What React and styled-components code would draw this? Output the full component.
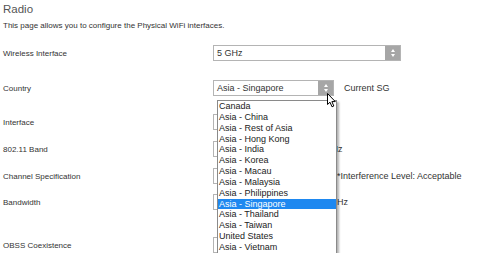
import React from "react"
import styled, { createGlobalStyle } from "styled-components"

const GlobalStyle = createGlobalStyle`
  body {
    margin: 0;
    background: #fff;
    color: #333;
    font-family: "Liberation Sans", Arial, sans-serif;
  }
`

const Page = styled.div`
  position: relative;
  padding: 2px 0 0 3px;
`

const Title = styled.h1`
  margin: 0;
  font-size: 11.5px;
  line-height: 14px;
  font-weight: normal;
  color: #555;
`

const Intro = styled.p`
  margin: 5px 0 0;
  font-size: 8px;
  line-height: 10px;
  color: #333;
`

const Form = styled.div`
  display: flex;
  flex-direction: column;
  margin-top: 14px;
`

const Row = styled.div`
  display: flex;
  align-items: center;
  height: 16px;
  margin-bottom: ${(p) => p.$space || 0}px;
`

const Label = styled.div`
  width: 210px;
  flex-shrink: 0;
  font-size: 8px;
  color: #333;
`

const SelectWrap = styled.div`
  position: relative;
  display: flex;
  align-items: center;
`

const SelectBox = styled.div`
  box-sizing: border-box;
  display: flex;
  align-items: center;
  justify-content: space-between;
  width: ${(p) => p.$width}px;
  height: 16px;
  border: 1px solid #b4b4b4;
  background: #fff;
  font-size: 9px;
  color: #333;
  padding-left: 3px;
`

const Arrow = styled.div`
  display: flex;
  flex-direction: column;
  align-items: center;
  justify-content: center;
  gap: 2px;
  width: 15px;
  height: 100%;
  background: #a6a6a6;
`

const Tri = styled.span`
  width: 0;
  height: 0;
  border-left: 2px solid transparent;
  border-right: 2px solid transparent;
  ${(p) =>
    p.$down ? "border-top: 3px solid #fff;" : "border-bottom: 3px solid #fff;"}
`

const Note = styled.span`
  margin-left: ${(p) => p.$offset || 10}px;
  font-size: 9px;
  color: #333;
  white-space: nowrap;
`

const List = styled.ul`
  position: absolute;
  top: 20px;
  left: 4px;
  z-index: 5;
  box-sizing: border-box;
  width: 120px;
  margin: 0;
  padding: 0;
  list-style: none;
  border: 1px solid #8a8a8a;
  background: #fff;
  box-shadow: 2px 2px 2px rgba(0, 0, 0, 0.3);
`

const Option = styled.li`
  height: 10.85px;
  line-height: 10.85px;
  padding-left: 1px;
  font-size: 9px;
  white-space: nowrap;
  color: ${(p) => (p.$active ? "#fff" : "#222")};
  background: ${(p) => (p.$active ? "#1e88f0" : "transparent")};
`

const Cursor = styled.svg`
  position: absolute;
  left: 114px;
  top: 13px;
  z-index: 6;
`

const countries = [
  "Canada",
  "Asia - China",
  "Asia - Rest of Asia",
  "Asia - Hong Kong",
  "Asia - India",
  "Asia - Korea",
  "Asia - Macau",
  "Asia - Malaysia",
  "Asia - Philippines",
  "Asia - Singapore",
  "Asia - Thailand",
  "Asia - Taiwan",
  "United States",
  "Asia - Vietnam",
]

const Select = ({ width, value }) => (
  <SelectBox $width={width}>
    <span>{value}</span>
    <Arrow>
      <Tri />
      <Tri $down />
    </Arrow>
  </SelectBox>
)

const App = () => {
  return (
    <Page>
      <GlobalStyle />
      <Title>Radio</Title>
      <Intro>This page allows you to configure the Physical WiFi interfaces.</Intro>

      <Form>
        <Row $space={19}>
          <Label>Wireless Interface</Label>
          <Select width={188} value="5 GHz" />
        </Row>

        <Row $space={18}>
          <Label>Country</Label>
          <SelectWrap>
            <Select width={121} value="Asia - Singapore" />
            <List>
              {countries.map((c) => (
                <Option key={c} $active={c === "Asia - Singapore"}>
                  {c}
                </Option>
              ))}
            </List>
            <Cursor width="10" height="15" viewBox="0 0 10 15">
              <path
                d="M0.5 0.5 L0.5 11.5 L3 9.2 L5 13.8 L6.8 13 L4.9 8.6 L8.3 8.6 Z"
                fill="#fff"
                stroke="#000"
                strokeWidth="1"
                strokeLinejoin="round"
              />
            </Cursor>
          </SelectWrap>
          <Note>Current SG</Note>
        </Row>

        {/* the rows below sit behind the open country list */}
        <Row $space={11}>
          <Label>Interface</Label>
          <Select width={100} />
        </Row>

        <Row $space={11}>
          <Label>802.11 Band</Label>
          <Select width={94} />
          <Note>5 GHz</Note>
        </Row>

        <Row $space={10}>
          <Label>Channel Specification</Label>
          <Select width={114} />
          <Note>*Interference Level: Acceptable</Note>
        </Row>

        <Row $space={27}>
          <Label>Bandwidth</Label>
          <Select width={94} />
          <Note>80 MHz</Note>
        </Row>

        <Row>
          <Label>OBSS Coexistence</Label>
          <Select width={100} />
        </Row>
      </Form>
    </Page>
  )
}

export default App
